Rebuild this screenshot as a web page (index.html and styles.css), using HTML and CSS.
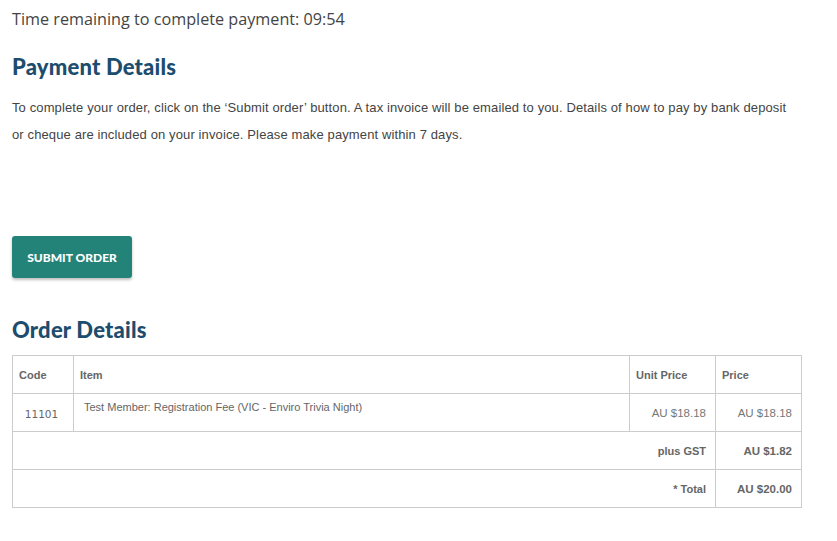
FILE: index.html
```html
<!DOCTYPE html>
<html lang="en">
<head>
    <meta charset="UTF-8">
    <title>Payment</title>
    <link rel="stylesheet" href="styles.css">
</head>
<body>
    <div class="page">
        <p class="timer">Time remaining to complete payment: <span id="countdown">09:54</span></p>

        <h2 class="section-title">Payment Details</h2>
        <p class="intro">To complete your order, click on the ‘Submit order’ button. A tax invoice will be emailed to you. Details of how to pay by bank deposit or cheque are included on your invoice. Please make payment within 7 days.</p>

        <div class="actions">
            <button class="btn-submit" type="button">Submit order</button>
        </div>

        <h2 class="section-title order-title">Order Details</h2>
        <table class="order">
            <thead>
                <tr>
                    <th class="col-code">Code</th>
                    <th class="col-item">Item</th>
                    <th class="col-unit">Unit Price</th>
                    <th class="col-price">Price</th>
                </tr>
            </thead>
            <tbody>
                <tr class="line">
                    <td class="code">11101</td>
                    <td class="item">Test Member: Registration Fee (VIC - Enviro Trivia Night)</td>
                    <td class="money">AU $18.18</td>
                    <td class="money">AU $18.18</td>
                </tr>
                <tr class="summary">
                    <td colspan="3" class="label">plus GST</td>
                    <td class="money">AU $1.82</td>
                </tr>
                <tr class="summary">
                    <td colspan="3" class="label">* Total</td>
                    <td class="money">AU $20.00</td>
                </tr>
            </tbody>
        </table>
    </div>
</body>
</html>
```

FILE: styles.css
```css
body {
    margin: 0;
    background: #fff;
    font-family: "Liberation Sans", Arial, sans-serif;
    color: #444;
}

.page {
    padding: 0 36px 0 12px;
}

.timer {
    margin: 0;
    padding-top: 8px;
    font-family: "Open Sans", "Liberation Sans", sans-serif;
    font-size: 16.2px;
    line-height: 22px;
    color: #444;
}

.section-title {
    margin: 24px 0 0;
    font-family: "Lato", "DejaVu Sans", sans-serif;
    font-weight: 900;
    font-size: 22px;
    line-height: 26px;
    color: #1c4d6e;
    letter-spacing: 0.2px;
}

.intro {
    margin: 14px 0 0;
    max-width: 785px;
    font-family: "Liberation Sans", Arial, sans-serif;
    font-size: 13px;
    letter-spacing: 0.12px;
    line-height: 27px;
    color: #444;
}

.actions {
    margin-top: 88px;
}

.btn-submit {
    width: 120px;
    height: 42px;
    border: 0;
    border-radius: 3px;
    background: #238379;
    color: #fff;
    font-family: "Lato", "Liberation Sans", sans-serif;
    font-weight: 900;
    font-size: 12px;
    text-transform: uppercase;
    box-shadow: 0 2px 3px rgba(0, 0, 0, 0.25);
    cursor: pointer;
}

.order-title {
    margin-top: 39px;
}

.order {
    margin-top: 12px;
    width: 790px;
    border-collapse: collapse;
    font-size: 11px;
    color: #666;
}

.order tr {
    height: 38px;
}

.order th,
.order td {
    border: 1px solid #ccc;
    padding: 0 9px 0 6px;
}

.order th {
    text-align: left;
    font-weight: bold;
}

.col-code { width: 45px; }
.col-unit { width: 70px; }
.col-price { width: 70px; }

.order td.code {
    text-align: center;
    font-family: "DejaVu Sans", Verdana, sans-serif;
    font-size: 10.5px;
    padding-top: 2px;
}

.order td.item {
    vertical-align: top;
    padding-top: 7px;
    padding-left: 10px;
}

.order td.money {
    text-align: right;
    font-size: 11.5px;
    color: #777;
}

.summary td,
.summary td.money {
    font-weight: bold;
    text-align: right;
    color: #666;
}
```
